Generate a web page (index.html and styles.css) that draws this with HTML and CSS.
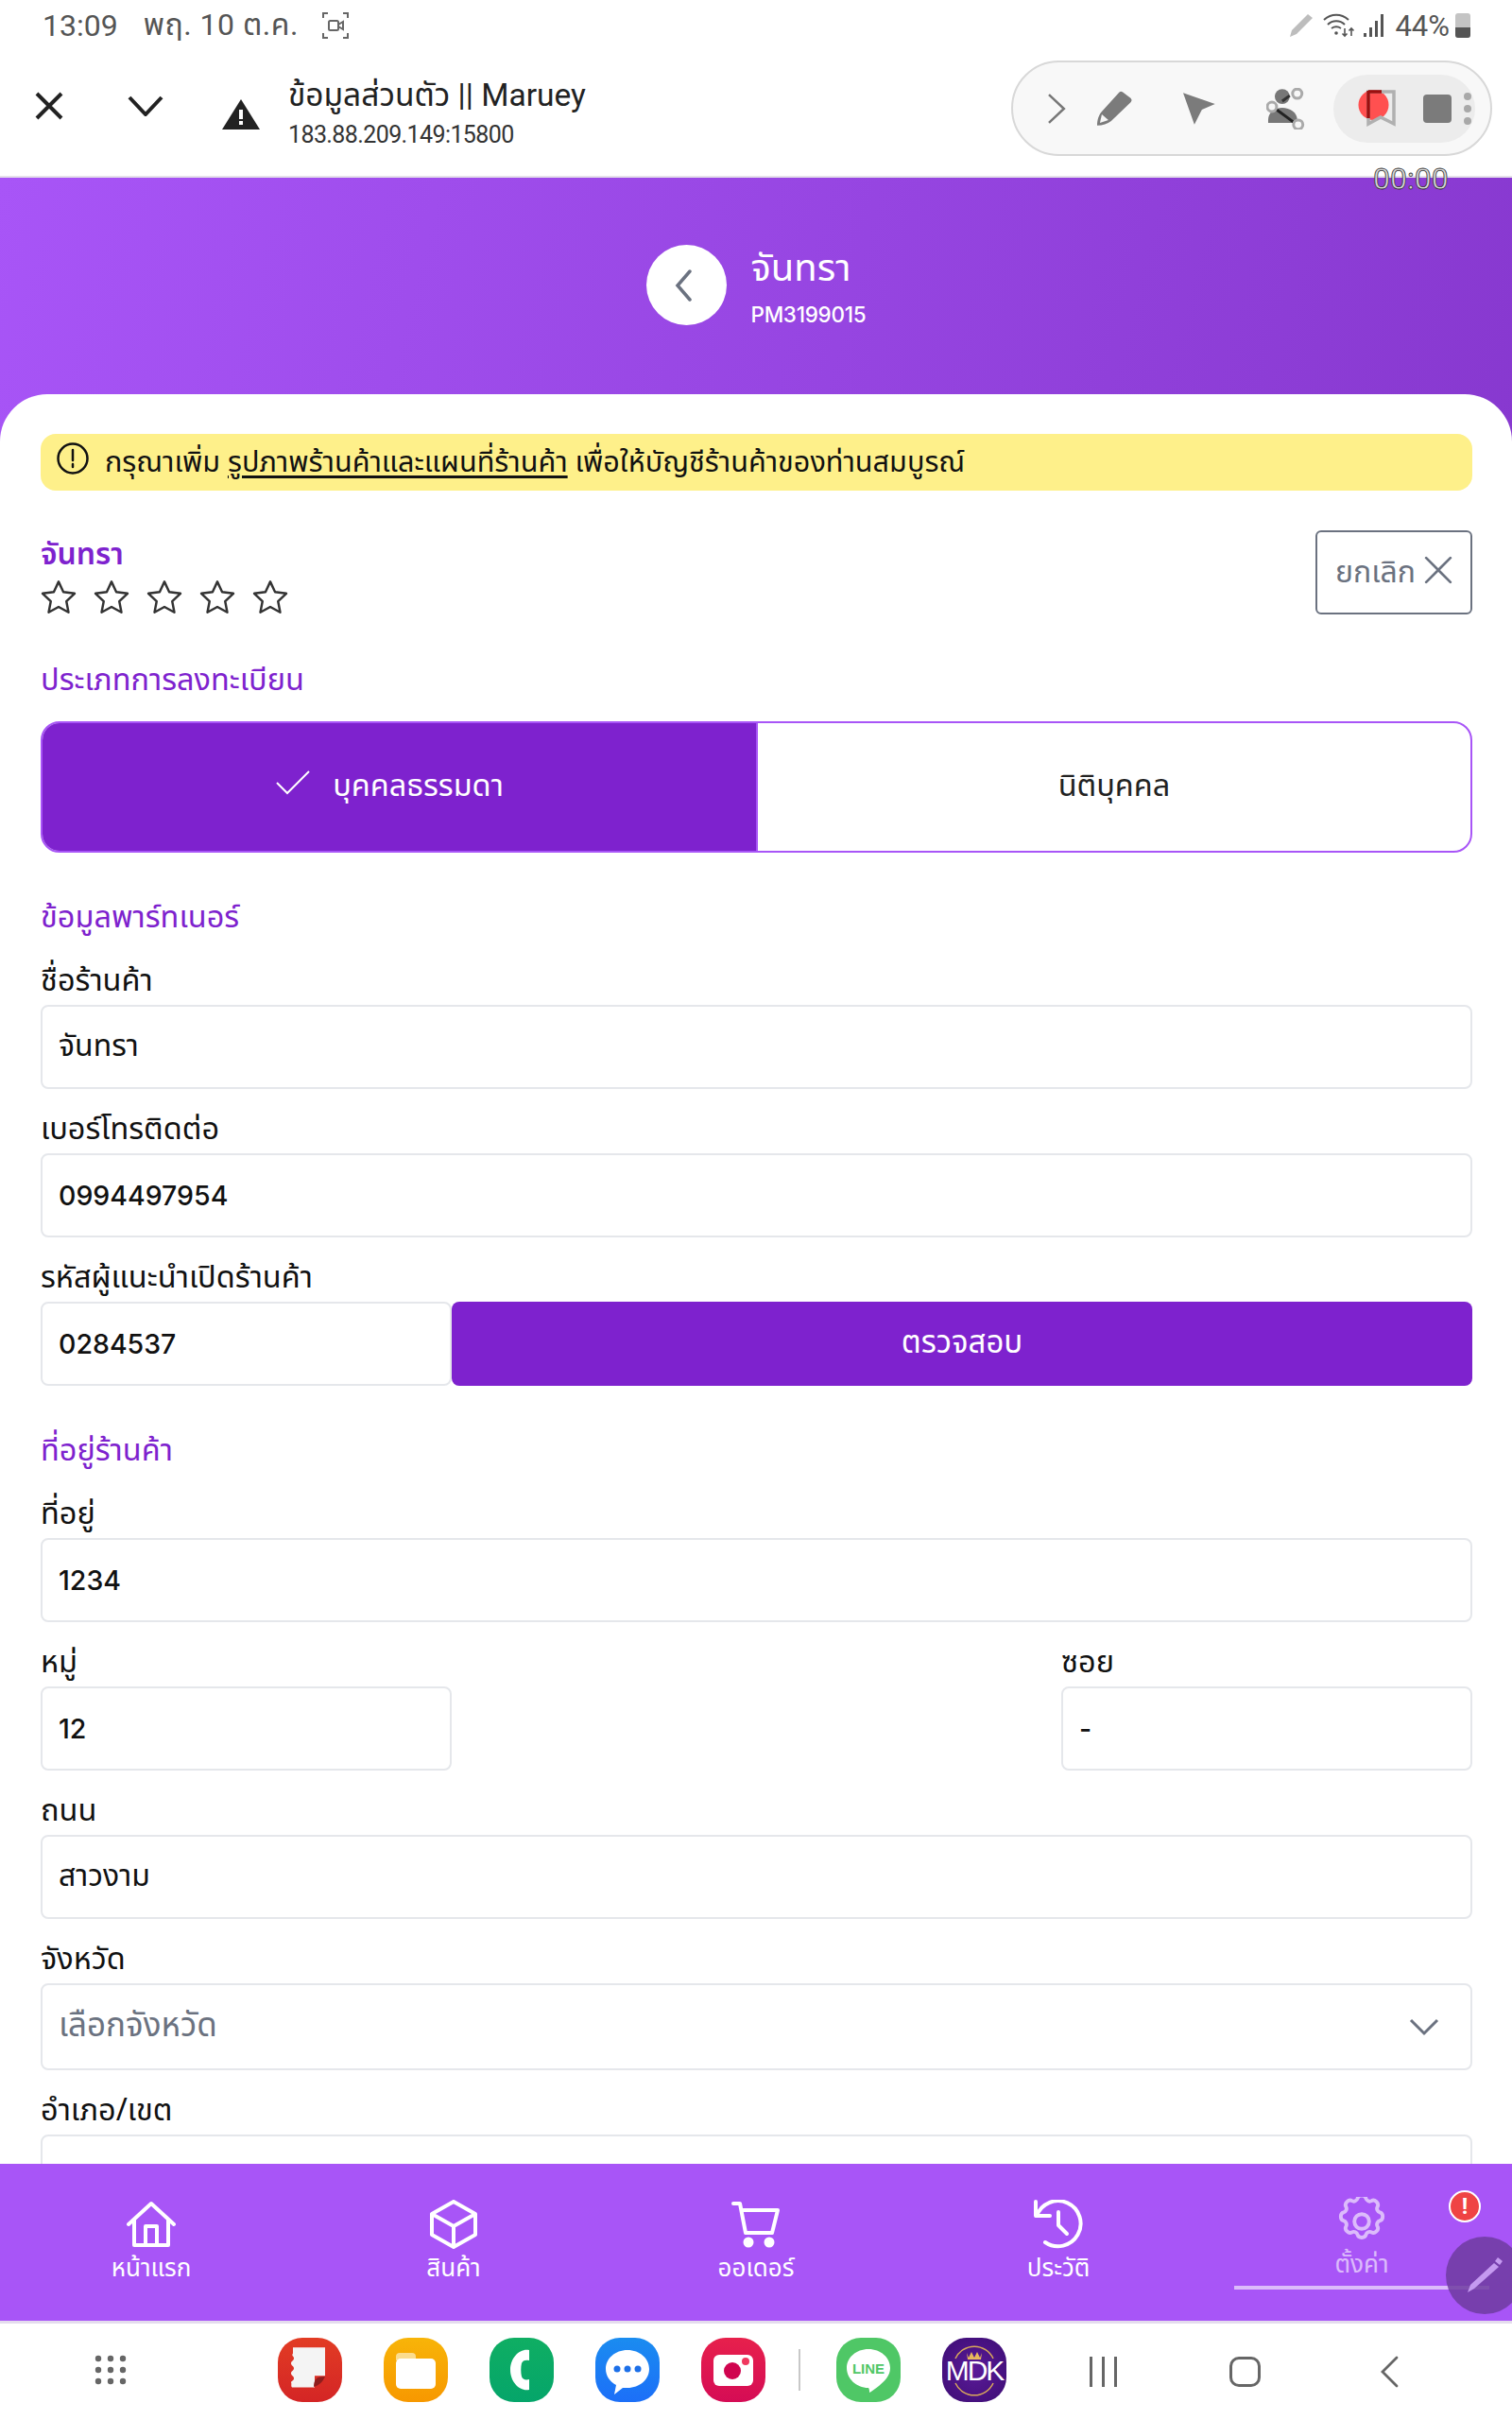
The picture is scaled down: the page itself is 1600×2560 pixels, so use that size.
FILE: index.html
```html
<!DOCTYPE html>
<html lang="th">
<head>
<meta charset="utf-8">
<title>ข้อมูลส่วนตัว || Maruey</title>
<link rel="stylesheet" href="styles.css">
</head>
<body>
<div class="screen">
  <header class="statusbar">
    <div class="status-left">
      <span class="time">13:09</span>
      <span class="date">พฤ. 10 ต.ค.</span>
      <svg class="rec-ico" width="30" height="30" viewBox="0 0 30 30" fill="none" stroke="#666" stroke-width="2"><path d="M2 7V2h5M23 2h5v5M28 23v5h-5M7 28H2v-5"/><rect x="8" y="10" width="10" height="10" rx="1.5"/><path d="M18 14l5-3v8l-5-3"/></svg>
    </div>
    <div class="status-right">
      <svg width="26" height="26" viewBox="0 0 26 26" fill="#bdbdbd"><path d="M20 1l5 4L8 22l-7 3 2-7z"/></svg>
      <svg class="wifi" width="34" height="26" viewBox="0 0 34 26" fill="none" stroke="#555" stroke-width="2"><path d="M1 7c8-7 18-7 26 0M5 12c5-5 13-5 18 0M9 16c3-2 7-2 10 0"/><circle cx="14" cy="21" r="1.8" fill="#555" stroke="none"/><path d="M23 16v8m-2.500-2.500l2.500 2.500 2.500-2.500M30 24v-8m-2.500 2.500l2.500-2.500 2.500 2.500" stroke-width="1.600"/></svg>
      <svg width="24" height="26" viewBox="0 0 24 26" fill="#555"><rect x="1" y="21" width="3" height="4"/><rect x="7" y="15" width="3" height="10"/><rect x="13" y="8" width="3" height="17"/><rect x="19" y="1" width="3" height="24"/></svg>
      <span class="battery-text">44%</span>
      <div class="battery"><div class="battery-fill"></div></div>
    </div>
  </header>

  <div class="browserbar">
    <svg class="b-x" width="30" height="30" viewBox="0 0 30 30" stroke="#222" stroke-width="4" fill="none"><path d="M2 2l26 26M28 2L2 28"/></svg>
    <svg class="b-chev" width="38" height="22" viewBox="0 0 38 22" stroke="#222" stroke-width="4" fill="none"><path d="M2 2l17 18L36 2"/></svg>
    <svg class="b-warn" width="40" height="32" viewBox="0 0 40 32"><path d="M20 0l20 32H0z" fill="#222"/><rect x="18" y="11" width="4" height="10" fill="#fff"/><rect x="18" y="23" width="4" height="4" fill="#fff"/></svg>
    <div class="b-title">
      <div class="b-name">ข้อมูลส่วนตัว || Maruey</div>
      <div class="b-url">183.88.209.149:15800</div>
    </div>
    <div class="pill">
      <svg class="p-chev" width="20" height="34" viewBox="0 0 20 34" fill="none" stroke="#777" stroke-width="2.500"><path d="M2 2l16 15L2 32"/></svg>
      <svg class="p-pen" width="40" height="40" viewBox="0 0 40 40" fill="#7b7b7b"><path d="M29 2l9 7a3 3 0 0 1 0 4L17 33c-4 3-9 5-15 5 0-6 2-12 5-15L25 3a3 3 0 0 1 4-1z"/><path d="M7 26l7 6-9 3z" fill="#f7f7f7"/></svg>
      <svg class="p-arrow" width="36" height="36" viewBox="0 0 36 36" fill="#7b7b7b"><path d="M1 1l34 12-14 6-8 16z"/></svg>
      <svg class="p-person" width="42" height="44" viewBox="0 0 42 44" fill="none"><circle cx="17" cy="9" r="8" fill="#777"/><path d="M2 34c0-8 7-13 15-13s16 5 16 13v3H2z" fill="#777"/><path d="M17 14l8-6" stroke="#333" stroke-width="3"/><path d="M11 23l19 14" stroke="#222" stroke-width="3"/><circle cx="33" cy="6" r="5" fill="#f7f7f7" stroke="#aaa" stroke-width="3"/><circle cx="6" cy="20" r="5" fill="#f7f7f7" stroke="#aaa" stroke-width="3"/><circle cx="34" cy="39" r="5" fill="#f7f7f7" stroke="#aaa" stroke-width="3"/></svg>
      <div class="rec-group">
        <svg width="42" height="40" viewBox="0 0 42 40"><circle cx="16.500" cy="16" r="16" fill="#ff5050"/><path d="M11 2h27v34l-14-7-13 7z" fill="none" stroke="#b0b0b0" stroke-width="3.500"/><path d="M11 1v29" stroke="#9c0f0f" stroke-width="3.500"/><path d="M11 2h14" stroke="#9c0f0f" stroke-width="3.500"/></svg>
        <div class="rec-stop"></div>
        <div class="rec-dots"><i></i><i></i><i></i></div>
      </div>
    </div>
  </div>

  <div class="timer">00:00</div>

  <main class="main">
    <section class="hero">
      <button class="back" type="button"><svg width="18" height="34" viewBox="0 0 18 34" fill="none" stroke="#6b7280" stroke-width="3.500" stroke-linecap="round"><path d="M16 2L3 17l13 15"/></svg></button>
      <div class="hero-text">
        <div class="hero-name">จันทรา</div>
        <div class="hero-code">PM3199015</div>
      </div>
    </section>

    <section class="card">
      <div class="alert">
        <svg width="36" height="36" viewBox="0 0 36 36" fill="none" stroke="#111" stroke-width="2.500"><circle cx="18" cy="18" r="15.500"/><path d="M18 9v11M18 24v3" stroke-linecap="round"/></svg>
        <span>กรุณาเพิ่ม <u>รูปภาพร้านค้าและแผนที่ร้านค้า</u> เพื่อให้บัญชีร้านค้าของท่านสมบูรณ์</span>
      </div>

      <div class="shop-row">
        <div>
          <div class="shop-name">จันทรา</div>
          <div class="stars">
            <svg width="42" height="42" viewBox="0 0 24 24"><path class="star" d="M12 2.500l2.900 6.200 6.800.9-5 4.700 1.300 6.700-6-3.300-6 3.300 1.300-6.700-5-4.700 6.800-.9z"/></svg>
            <svg width="42" height="42" viewBox="0 0 24 24"><path class="star" d="M12 2.500l2.900 6.200 6.800.9-5 4.700 1.300 6.700-6-3.300-6 3.300 1.300-6.700-5-4.700 6.800-.9z"/></svg>
            <svg width="42" height="42" viewBox="0 0 24 24"><path class="star" d="M12 2.500l2.900 6.200 6.800.9-5 4.700 1.300 6.700-6-3.300-6 3.300 1.300-6.700-5-4.700 6.800-.9z"/></svg>
            <svg width="42" height="42" viewBox="0 0 24 24"><path class="star" d="M12 2.500l2.900 6.200 6.800.9-5 4.700 1.300 6.700-6-3.300-6 3.300 1.300-6.700-5-4.700 6.800-.9z"/></svg>
            <svg width="42" height="42" viewBox="0 0 24 24"><path class="star" d="M12 2.500l2.900 6.200 6.800.9-5 4.700 1.300 6.700-6-3.300-6 3.300 1.300-6.700-5-4.700 6.800-.9z"/></svg>
          </div>
        </div>
        <button class="cancel" type="button">ยกเลิก
          <svg width="30" height="30" viewBox="0 0 28 28" stroke="#6b7280" stroke-width="2.500" fill="none" stroke-linecap="round"><path d="M2 2l24 24M26 2L2 26"/></svg>
        </button>
      </div>

      <h2 class="section-title first">ประเภทการลงทะเบียน</h2>
      <div class="toggle">
        <div class="toggle-on">
          <svg width="36" height="26" viewBox="0 0 36 26" fill="none" stroke="#fff" stroke-width="2"><path d="M1 13l11 11L35 1"/></svg>
          <span>บุคคลธรรมดา</span>
        </div>
        <div class="toggle-off">นิติบุคคล</div>
      </div>

      <h2 class="section-title">ข้อมูลพาร์ทเนอร์</h2>
      <div class="field"><label>ชื่อร้านค้า</label><div class="input">จันทรา</div></div>
      <div class="field"><label>เบอร์โทรติดต่อ</label><div class="input num">0994497954</div></div>
      <div class="field"><label>รหัสผู้แนะนำเปิดร้านค้า</label>
        <div class="ref-row"><div class="input half num">0284537</div><button class="check" type="button">ตรวจสอบ</button></div>
      </div>

      <h2 class="section-title">ที่อยู่ร้านค้า</h2>
      <div class="field"><label>ที่อยู่</label><div class="input num">1234</div></div>
      <div class="split">
        <div class="field half"><label>หมู่</label><div class="input num">12</div></div>
        <div class="field half"><label>ซอย</label><div class="input num">-</div></div>
      </div>
      <div class="field"><label>ถนน</label><div class="input">สาวงาม</div></div>
      <div class="field"><label>จังหวัด</label>
        <div class="input select"><span>เลือกจังหวัด</span><svg width="32" height="20" viewBox="0 0 32 20" fill="none" stroke="#6b7280" stroke-width="3"><path d="M2 3l14 14L30 3"/></svg></div>
      </div>
      <div class="field"><label>อำเภอ/เขต</label><div class="input select"></div></div>
    </section>
  </main>

  <nav class="tabbar">
    <a class="tab">
      <svg width="52" height="48" viewBox="0 0 52 48" fill="none" stroke="#fff" stroke-width="4" stroke-linejoin="round" stroke-linecap="round"><path d="M2 24L26 2l24 22M8 19v27h36V19M20 46V26h12v20"/></svg>
      <span>หน้าแรก</span>
    </a>
    <a class="tab">
      <svg width="52" height="52" viewBox="0 0 52 52" fill="none" stroke="#fff" stroke-width="4" stroke-linejoin="round"><path d="M26 2l23 13v22L26 50 3 37V15zM3 15l23 13 23-13M26 28v22"/></svg>
      <span>สินค้า</span>
    </a>
    <a class="tab">
      <svg width="52" height="50" viewBox="0 0 52 50" fill="none" stroke="#fff" stroke-width="4" stroke-linejoin="round" stroke-linecap="round"><path d="M2 3h7l6 31h27M11 10h38l-6 24"/><circle cx="18" cy="44" r="3.500" fill="#fff"/><circle cx="40" cy="44" r="3.500" fill="#fff"/></svg>
      <span>ออเดอร์</span>
    </a>
    <a class="tab">
      <svg width="54" height="52" viewBox="0 0 54 52" fill="none" stroke="#fff" stroke-width="4" stroke-linecap="round" stroke-linejoin="round"><path d="M3 2v15h15"/><path d="M4 17A24 24 0 1 1 13 45"/><path d="M27 13v14l9 9"/></svg>
      <span>ประวัติ</span>
    </a>
    <a class="tab active">
      <svg width="52" height="52" viewBox="2.300 2 19.400 20" fill="none" stroke="#fff" stroke-width="1.500" stroke-linejoin="round"><circle cx="12" cy="12" r="3"/><path d="M10.300 2.600c.4-1.500 3-1.500 3.400 0 .3 1 1.400 1.500 2.300 1 1.300-.8 3.200 1.100 2.400 2.400-.5.900 0 2 1 2.300 1.500.4 1.500 3 0 3.400-1 .3-1.500 1.400-1 2.300.8 1.300-1.100 3.200-2.400 2.400-.9-.5-2 0-2.300 1-.4 1.500-3 1.500-3.400 0-.3-1-1.400-1.500-2.300-1-1.300.8-3.200-1.100-2.400-2.400.5-.9 0-2-1-2.300-1.500-.4-1.500-3 0-3.400 1-.3 1.500-1.400 1-2.300-.8-1.300 1.100-3.200 2.400-2.400.9.500 2 0 2.300-1z"/></svg>
      <span>ตั้งค่า</span>
    </a>
    <div class="tab-badge">!</div>
    <div class="float-pen"><svg width="40" height="40" viewBox="0 0 40 40" fill="#c59af0"><path d="M34 1l5 4-3 4-5-4z"/><path d="M30 7l5 4L9 34l-7 4 3-8z"/></svg></div>
  </nav>

  <footer class="dock">
    <svg class="apps" width="34" height="32" viewBox="0 0 34 32" fill="#666"><circle cx="4" cy="4" r="3.200"/><circle cx="17" cy="4" r="3.200"/><circle cx="30" cy="4" r="3.200"/><circle cx="4" cy="16" r="3.200"/><circle cx="17" cy="16" r="3.200"/><circle cx="30" cy="16" r="3.200"/><circle cx="4" cy="28" r="3.200"/><circle cx="17" cy="28" r="3.200"/><circle cx="30" cy="28" r="3.200"/></svg>
    <div class="app a-red"><svg width="68" height="68" viewBox="0 0 68 68"><path d="M16 14h34v34H39v14H16c-3 0-1-4-2-6 0-2 3-2 3-5s-3-3-3-6 3-3 3-6-3-3-3-6 3-3 3-6-3-3-1-6z" fill="#f4f4f4" transform="translate(0 -2) scale(1 .88)"/><path d="M38 52c0-8 3-11 12-11-2 5-6 9-12 11z" fill="#8e1d1d"/></svg></div>
    <div class="app a-yellow"><svg width="68" height="68" viewBox="0 0 68 68"><path d="M13 20a4 4 0 0 1 4-4h13a4 4 0 0 1 4 4v4H13z" fill="#fbdc8e"/><rect x="13" y="22" width="42" height="32" rx="5" fill="#fff"/></svg></div>
    <div class="app a-green"><svg width="68" height="68" viewBox="0 0 68 68"><path d="M42 13c-10-2-20 8-20 21s10 23 20 21v-11c-4 1-7 0-8-3-1-4-1-10 0-14 1-3 4-4 8-3z" fill="#fff"/></svg></div>
    <div class="app a-blue"><svg width="68" height="68" viewBox="0 0 68 68"><path d="M34 13c13 0 23 9 23 20s-10 20-23 20c-2 0-4 0-5 0l-9 7 2-10c-7-4-11-10-11-17 0-11 10-20 23-20z" fill="#fff"/><circle cx="23" cy="33" r="3.500" fill="#1c6fe8"/><circle cx="34" cy="33" r="3.500" fill="#1c6fe8"/><circle cx="45" cy="33" r="3.500" fill="#1c6fe8"/></svg></div>
    <div class="app a-pink"><svg width="68" height="68" viewBox="0 0 68 68"><rect x="13" y="18" width="42" height="33" rx="6" fill="#fff"/><circle cx="33" cy="35" r="9" fill="#d0044f"/><circle cx="47" cy="25" r="4" fill="#f0385f"/></svg></div>
    <div class="dock-sep"></div>
    <div class="app a-line"><svg width="68" height="68" viewBox="0 0 68 68"><path d="M34 12c13 0 23 9 23 20 0 8-6 14-12 19-4 3-8 6-10 7 0-2 0-4-1-5-13 0-23-10-23-21s10-20 23-20z" fill="#fff"/><text x="34" y="38" class="line-text">LINE</text></svg></div>
    <div class="app a-mdk"><svg width="68" height="68" viewBox="0 0 68 68" fill="none"><path d="M14 22a22 22 0 0 1 40 0M14 48a22 22 0 0 0 40 0" stroke="#d9a95a" stroke-width="1.500"/><path d="M26 16l2 5 3-6 3 6 3-6 3 6 2-5-1 7H27z" fill="#e8b85c"/><text x="34" y="45" class="mdk-text">MDK</text></svg></div>
    <div class="softkeys">
      <div class="sk-recent"><i></i><i></i><i></i></div>
      <div class="sk-home"></div>
      <svg width="20" height="34" viewBox="0 0 20 34" fill="none" stroke="#666" stroke-width="2.800" stroke-linecap="round"><path d="M18 2L3 17l15 15"/></svg>
    </div>
  </footer>
</div>
</body>
</html>
```

FILE: styles.css
```css
* { box-sizing: border-box; }
html, body { margin: 0; padding: 0; background: #fff; }
body { font-family: "Noto Sans Thai", "Lato", "Noto Sans", "Noto Sans CJK SC", sans-serif; color: #111; }
button { font: inherit; }

.screen { position: relative; width: 1600px; height: 2560px; display: flex; flex-direction: column; overflow: hidden; }

.statusbar { height: 50px; flex: none; display: flex; justify-content: space-between; align-items: center; padding: 4px 44px 0 45px; font-family: Roboto, "Noto Sans Thai", "Noto Sans", sans-serif; color: #555; font-size: 32px; }
.status-left { display: flex; align-items: center; }
.date { margin-left: 27px; letter-spacing: 0.5px; }
.rec-ico { margin-left: 24px; }
.status-right { display: flex; align-items: center; gap: 8px; }
.wifi { margin-left: 2px; }
.battery-text { margin-left: 2px; font-size: 31px; }
.battery { width: 16px; height: 26px; border-radius: 3px; background: #c4c4c4; display: flex; align-items: flex-end; overflow: hidden; margin-left: -2px; }
.battery-fill { width: 100%; height: 11px; background: #555; }

.browserbar { height: 138px; flex: none; display: flex; align-items: center; padding: 0 21px 0 37px; border-bottom: 2px solid #e5e0ea; }
.b-x { margin-top: -12px; }
.b-chev { margin: -12px 0 0 68px; }
.b-warn { margin: 6px 0 0 62px; }
.b-title { margin: 4px 0 0 30px; flex: 1; }
.b-name { font-size: 33.500px; line-height: 44px; font-family: Roboto, "Noto Sans Thai", sans-serif; color: #222; }
.b-url { font-size: 25px; line-height: 36px; font-family: Roboto, sans-serif; color: #333; letter-spacing: -0.6px; margin-top: 2px; }

.pill { width: 509px; height: 101px; margin-top: -7px; border: 2px solid #d8d8d8; border-radius: 51px; background: #f8f8f8; display: flex; align-items: center; padding: 0 16px 0 36px; }
.p-pen { margin-left: 31px; }
.p-arrow { margin-left: 52px; }
.p-person { margin-left: 54px; }
.rec-group { margin-left: 29px; width: 151px; height: 72px; border-radius: 36px; background: #ececec; display: flex; align-items: center; padding-left: 26px; }
.rec-stop { width: 30px; height: 30px; border-radius: 4px; background: #7b7b7b; margin-left: 27px; }
.rec-dots { display: flex; flex-direction: column; gap: 5px; margin-left: 13px; }
.rec-dots i { display: block; width: 8px; height: 8px; border-radius: 50%; background: #a8a8a8; }

.timer { position: absolute; left: 1453px; top: 170px; font: 32px/38px Roboto, sans-serif; color: #d8d8d8; -webkit-text-stroke: 0.8px #333; z-index: 3; }

.main { flex: 1; min-height: 0; overflow: hidden; background: linear-gradient(105deg, #a855f7 0%, #7e30c4 100%); }

.hero { height: 229px; display: flex; justify-content: center; align-items: flex-start; padding-top: 71px; gap: 26px; color: #fff; }
.back { width: 85px; height: 85px; border-radius: 50%; border: 0; background: #fff; display: flex; align-items: center; justify-content: center; padding: 0 6px 0 0; }
.hero-text { width: 122px; white-space: nowrap; }
.hero-name { font-size: 40px; line-height: 48px; margin-top: 2px; }
.hero-code { font-family: Inter, "Lato", sans-serif; font-size: 22.500px; font-weight: 500; line-height: 32px; margin-top: 8px; letter-spacing: -0.3px; }

.card { background: #fff; border-radius: 50px 50px 0 0; padding: 42px 42px 0 43px; height: 2000px; }

.alert { height: 60px; background: #fef08a; border-radius: 16px; display: flex; align-items: center; gap: 16px; padding: 0 16px; font-size: 30.600px; color: #111; white-space: nowrap; }
.alert svg { margin-top: -8px; }
.alert span { margin-top: 2px; }
.alert u { text-underline-offset: 4px; }

.shop-row { display: flex; justify-content: space-between; align-items: flex-start; margin-top: 42px; }
.shop-name { font-size: 32px; line-height: 40px; color: #7e22ce; font-weight: 600; margin-top: 6px; }
.stars { display: flex; gap: 14px; margin-top: 4px; margin-left: -2px; }
.star { fill: none; stroke: #333; stroke-width: 1.400; stroke-linejoin: round; }
.cancel { width: 166px; height: 89px; border: 2px solid #6b7280; border-radius: 6px; background: #fff; color: #6b7280; font-size: 32px; display: flex; align-items: center; justify-content: center; gap: 9px; padding: 0; }
.cancel svg { margin-top: -6px; }

.section-title { font-size: 32.500px; line-height: 40px; font-weight: 400; color: #7e22ce; margin: 50px 0 24px; }
.section-title.first { margin: 47.500px 0 22px; }

.toggle { height: 139px; display: flex; border: 2px solid #a855f7; border-radius: 20px; overflow: hidden; font-size: 32.500px; }
.toggle-on { width: 755px; background: #7e22ce; color: #fff; display: flex; align-items: center; justify-content: center; gap: 24px; padding-right: 20px; }
.toggle-on svg { margin-top: -8px; }
.toggle-off { flex: 1; border-left: 2px solid #a855f7; display: flex; align-items: center; justify-content: center; color: #222; }

.field { margin-bottom: 21px; }
.field label { display: block; font-size: 32.500px; line-height: 40px; padding-top: 3px; margin-bottom: 4px; color: #111; }
.input { height: 89px; border: 2px solid #e5e7eb; border-radius: 8px; padding: 0 17px; display: flex; align-items: center; font-size: 32px; color: #111; background: #fff; }
.num { font-family: Inter, "Lato", sans-serif; font-size: 28.500px; font-weight: 500; }
.select { height: 92px; justify-content: space-between; color: #6b7280; padding-right: 33px; font-size: 35px; }
.half { width: 435px; flex: none; }
.ref-row { display: flex; }
.check { flex: 1; height: 89px; border: 0; border-radius: 8px; background: #7e22ce; color: #fff; font-size: 33px; }
.split { display: flex; justify-content: space-between; }

.tabbar { position: relative; height: 169px; flex: none; background: #a855f7; border-bottom: 3px solid #e4dcee; display: grid; grid-template-columns: repeat(5, 1fr); }
.tab { display: flex; flex-direction: column; align-items: center; padding-top: 38px; height: 133px; color: #fff; font-size: 26px; line-height: 34px; gap: 4px; }
.tab svg { height: 52px; }
.tab.active { opacity: 0.6; border-bottom: 4px solid #fff; margin: 0 24px 0 26px; padding-top: 35px; }
.tab.active span { margin-top: -1px; }
.tab-badge { position: absolute; left: 1533px; top: 28px; width: 34px; height: 34px; border-radius: 50%; background: #ef4444; border: 2px solid #fff; color: #fff; font: 700 24px/30px Roboto, sans-serif; text-align: center; }
.float-pen { position: absolute; left: 1530px; top: 77px; width: 82px; height: 82px; border-radius: 50%; background: rgba(110, 60, 160, 0.85); display: flex; align-items: center; justify-content: center; }

.dock { height: 102px; flex: none; display: flex; align-items: center; padding: 0 0 4px 100px; background: #fff; }
.apps { margin-right: 160px; }
.app { width: 68px; height: 68px; border-radius: 26px; margin-right: 44px; flex: none; }
.app svg { display: block; }
.a-red { background: linear-gradient(#e23c24, #d42525); }
.a-yellow { background: linear-gradient(#f8b408, #f79800); }
.a-green { background: linear-gradient(#0fae63, #05a56a); }
.a-blue { background: linear-gradient(#1a8cf0, #1c6ff8); }
.a-pink { background: linear-gradient(#e7204c, #d50c55); margin-right: 0; }
.dock-sep { width: 2px; height: 44px; background: #c8c8c8; margin: 0 38px 0 35px; }
.a-line { background: #4fc766; }
.a-mdk { background: radial-gradient(#5b1a99, #3c0d73); margin-right: 0; }
.line-text { font: 700 15px "Liberation Sans", sans-serif; fill: #4fc766; text-anchor: middle; }
.mdk-text { font: 400 30px "Liberation Sans", sans-serif; letter-spacing: -2px; fill: #fff; text-anchor: middle; }
.softkeys { display: flex; align-items: center; margin: 4px 0 0 88px; }
.sk-recent { display: flex; gap: 10px; }
.sk-recent i { display: block; width: 3px; height: 32px; background: #666; }
.sk-home { width: 33px; height: 32px; border: 3px solid #666; border-radius: 10px; margin-left: 119px; margin-right: 126px; }
```
